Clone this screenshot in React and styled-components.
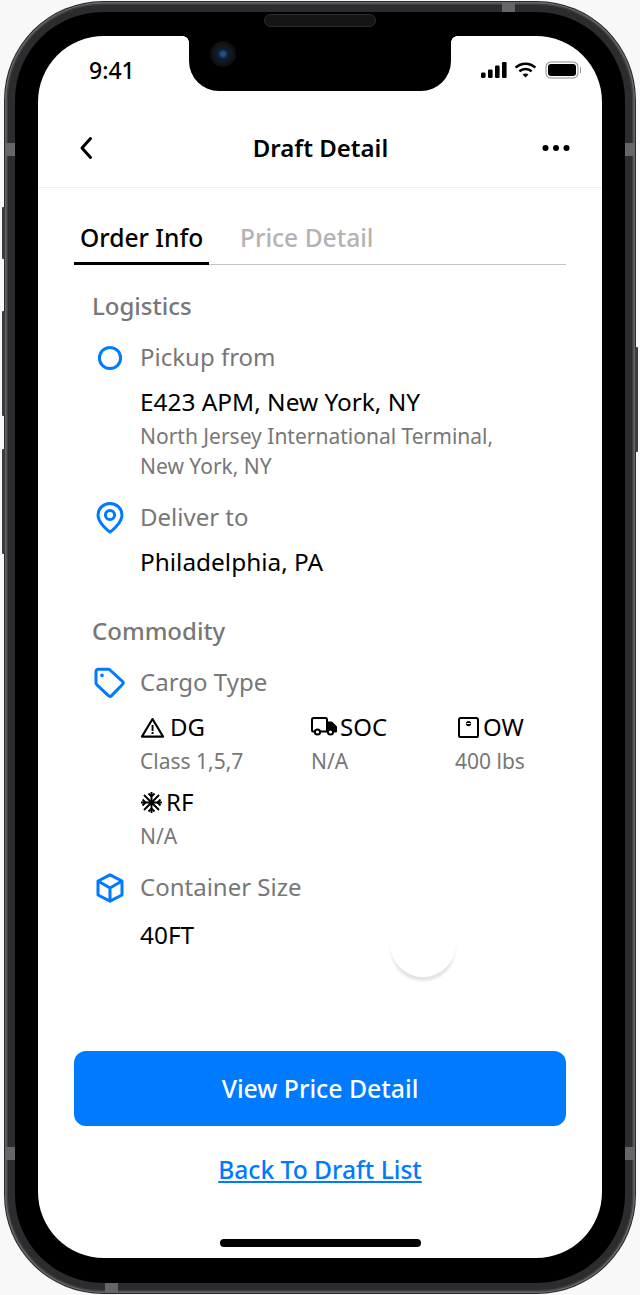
import React from 'react';
import styled, { createGlobalStyle } from 'styled-components';

const GlobalStyle = createGlobalStyle`
    html, body {
        margin: 0;
        padding: 0;
        background: #f8f8f8;
        font-family: "Noto Sans", "Open Sans", sans-serif;
    }
    * { box-sizing: border-box; }
`;

export default function App() {
    return (
        <>
            <GlobalStyle />
            <Page>
                <Phone>
                    <SideButton $side="left" $top={205} $h={52} />
                    <SideButton $side="left" $top={309} $h={105} />
                    <SideButton $side="left" $top={447} $h={105} />
                    <SideButton $side="right" $top={345} $h={105} />
                    <AntennaBand $side="left" $top={141} />
                    <AntennaBand $side="right" $top={141} />
                    <AntennaBand $side="left" $top={1145} />
                    <AntennaBand $side="right" $top={1145} />
                    <AntennaTop $left={172} $edge="bottom" />
                    <AntennaTop $left={569} $edge="top" />
                    <Speaker />
                    <Screen>
                        <Notch>
                            <Camera />
                        </Notch>
                        <StatusBar>
                            <Time>9:41</Time>
                            <StatusIcons>
                                <SignalIcon />
                                <WifiIcon />
                                <Battery />
                            </StatusIcons>
                        </StatusBar>
                        <NavBar>
                            <BackIcon />
                            <Title>Draft Detail</Title>
                            <DotsIcon />
                        </NavBar>
                        <Tabs>
                            <Tab $active>Order Info</Tab>
                            <Tab>Price Detail</Tab>
                        </Tabs>
                        <Content>
                            <SectionTitle>Logistics</SectionTitle>
                            <Row>
                                <CircleIcon />
                                <Label>Pickup from</Label>
                            </Row>
                            <Value>E423 APM, New York, NY</Value>
                            <Sub>North Jersey International Terminal,<br />New York, NY</Sub>
                            <Row>
                                <PinIcon />
                                <Label>Deliver to</Label>
                            </Row>
                            <Value>Philadelphia, PA</Value>

                            <SectionTitle $second>Commodity</SectionTitle>
                            <Row>
                                <TagIcon />
                                <Label>Cargo Type</Label>
                            </Row>
                            <CargoGrid>
                                <Cargo>
                                    <CargoName $gap={5}><WarningIcon />DG</CargoName>
                                    <CargoNote>Class 1,5,7</CargoNote>
                                </Cargo>
                                <Cargo>
                                    <CargoName $gap={3}><TruckIcon />SOC</CargoName>
                                    <CargoNote>N/A</CargoNote>
                                </Cargo>
                                <Cargo>
                                    <CargoName $gap={4} $inset={3}><ScaleIcon />OW</CargoName>
                                    <CargoNote>400 lbs</CargoNote>
                                </Cargo>
                                <Cargo>
                                    <CargoName $gap={3}><SnowIcon />RF</CargoName>
                                    <CargoNote>N/A</CargoNote>
                                </Cargo>
                            </CargoGrid>
                            <Row>
                                <BoxIcon />
                                <Label>Container Size</Label>
                            </Row>
                            <Value $low>40FT</Value>
                        </Content>
                        <Spinner />
                        <Footer>
                            <PrimaryButton>View Price Detail</PrimaryButton>
                            <BackLink href="#">Back To Draft List</BackLink>
                        </Footer>
                        <HomeBar />
                    </Screen>
                </Phone>
            </Page>
        </>
    );
}

const BLUE = '#007aff';

function BackIcon() {
    return (
        <svg width="14" height="24" viewBox="0 0 14 24" fill="none">
            <path d="M11.5 2.5 L3 12 L11.5 21.5" stroke="#000" strokeWidth="3" strokeLinecap="round" strokeLinejoin="round" />
        </svg>
    );
}

function DotsIcon() {
    return (
        <svg width="28" height="8" viewBox="0 0 28 8" fill="#000">
            <circle cx="3.5" cy="4" r="3" />
            <circle cx="14" cy="4" r="3" />
            <circle cx="24.5" cy="4" r="3" />
        </svg>
    );
}

function SignalIcon() {
    return (
        <svg width="26" height="16" viewBox="0 0 26 16" fill="#000">
            <rect x="0" y="10.5" width="4.6" height="5.5" rx="1.4" />
            <rect x="7" y="7.5" width="4.6" height="8.5" rx="1.2" />
            <rect x="14" y="3.5" width="4.6" height="12.5" rx="1.2" />
            <rect x="21" y="0" width="4.6" height="16" rx="1.2" />
        </svg>
    );
}

function WifiIcon() {
    return (
        <svg width="23" height="16" viewBox="0 0 24 17" fill="none" stroke="#000" strokeWidth="2.8">
            <path d="M1.5 6 C7.5 0.4 16.5 0.4 22.5 6" />
            <path d="M5.5 10 C9 6.6 15 6.6 18.5 10" />
            <path d="M12 16.5 L8.8 13.4 C10.6 11.8 13.4 11.8 15.2 13.4 Z" fill="#000" stroke="none" />
        </svg>
    );
}

function CircleIcon() {
    return (
        <IconSlot>
            <svg width="26" height="26" viewBox="0 0 26 26" fill="none">
                <circle cx="13" cy="13" r="10.6" stroke={BLUE} strokeWidth="3" />
            </svg>
        </IconSlot>
    );
}

function PinIcon() {
    return (
        <IconSlot>
            <svg width="28" height="32" viewBox="0 0 28 32" fill="none" stroke={BLUE} strokeWidth="3" strokeLinejoin="round">
                <path d="M14 30 C14 30 2 21.5 2 13 C2 6.4 7.4 1.6 14 1.6 C20.6 1.6 26 6.4 26 13 C26 21.5 14 30 14 30 Z" />
                <circle cx="14" cy="13" r="4.6" />
            </svg>
        </IconSlot>
    );
}

function TagIcon() {
    return (
        <IconSlot $shift={-1}>
            <svg width="32" height="32" viewBox="0 0 32 32" fill="none">
                <path d="M3 4.5 C3 3.2 4 2.2 5.3 2.2 L15.2 2.2 C15.9 2.2 16.5 2.5 17 3 L29.4 14.4 C30.3 15.3 30.3 16.6 29.4 17.5 L18.6 28.6 C17.7 29.5 16.3 29.5 15.4 28.7 L3.9 17.8 C3.3 17.3 3 16.6 3 15.8 Z" stroke={BLUE} strokeWidth="3" strokeLinejoin="round" />
                <circle cx="9" cy="8.4" r="1.8" fill={BLUE} />
            </svg>
        </IconSlot>
    );
}

function BoxIcon() {
    return (
        <IconSlot>
            <svg width="28" height="30" viewBox="0 0 28 30" fill="none" stroke={BLUE} strokeWidth="3" strokeLinejoin="round">
                <path d="M14 1.8 L26 8 L26 22 L14 28.2 L2 22 L2 8 Z" />
                <path d="M2 8 L14 15 L26 8 M14 15 L14 28.2" />
            </svg>
        </IconSlot>
    );
}

function WarningIcon() {
    return (
        <svg width="25" height="21" viewBox="0 0 24 21" fill="none">
            <path d="M12 2 L22.6 19.6 L1.4 19.6 Z" stroke="#000" strokeWidth="2.1" strokeLinejoin="round" />
            <rect x="11.1" y="8" width="1.9" height="6" fill="#000" />
            <rect x="11.1" y="15" width="1.9" height="2" fill="#000" />
        </svg>
    );
}

function TruckIcon() {
    return (
        <svg width="26" height="20" viewBox="0 0 26 20" fill="none" stroke="#000" strokeWidth="2" strokeLinejoin="round">
            <path d="M4 14.5 L2.6 14.5 C1.7 14.5 1 13.8 1 12.9 L1 2.6 C1 1.7 1.7 1 2.6 1 L14.5 1 C15.4 1 16 1.7 16 2.6 L16 14.5 L9 14.5" />
            <path d="M16 5.5 L20.5 5.5 L25 10 L25 14.5 L23 14.5 L16 14.5 Z" fill="#000" />
            <circle cx="6.5" cy="15" r="2.6" fill="#fff" />
            <circle cx="19.5" cy="15" r="2.6" fill="#fff" />
        </svg>
    );
}

function ScaleIcon() {
    return (
        <svg width="21" height="21" viewBox="0 0 21 21" fill="none">
            <rect x="1" y="1" width="19" height="19" rx="1.6" stroke="#000" strokeWidth="2" />
            <circle cx="10.5" cy="6.6" r="2.6" fill="#000" />
            <rect x="8.5" y="6" width="4" height="1" fill="#fff" />
        </svg>
    );
}

function SnowIcon() {
    return (
        <svg width="23" height="23" viewBox="0 0 23 23" fill="none" stroke="#000" strokeWidth="1.9">
            <path d="M11.5 1 L11.5 22 M1 11.5 L22 11.5 M4 4 L19 19 M19 4 L4 19" />
            <path d="M8.5 2.5 L11.5 5.5 L14.5 2.5 M8.5 20.5 L11.5 17.5 L14.5 20.5 M2.5 8.5 L5.5 11.5 L2.5 14.5 M20.5 8.5 L17.5 11.5 L20.5 14.5" />
        </svg>
    );
}

const Page = styled.div`
    width: 640px;
    height: 1295px;
    padding: 2px 5px;
    overflow: hidden;
`;

const Phone = styled.div`
    position: relative;
    width: 630px;
    height: 1291px;
    padding: 34px 33px 35px;
    background: #000;
    border-radius: 98px;
    box-shadow:
        0 0 0 1px #2a2a2c,
        inset 0 0 0 1.5px #66666a,
        inset 0 0 0 3px #3e3e40,
        inset 0 0 0 10px #2c2c2e,
        inset 0 0 0 11px #000;
`;

const SideButton = styled.span`
    position: absolute;
    top: ${p => p.$top}px;
    ${p => p.$side}: -3px;
    width: 3px;
    height: ${p => p.$h}px;
    background: #3c3c3e;
    border-radius: 1px;
`;

const AntennaBand = styled.span`
    position: absolute;
    top: ${p => p.$top}px;
    ${p => p.$side}: 1px;
    width: 9px;
    height: 13px;
    background: #66666a;
`;

const AntennaTop = styled.span`
    position: absolute;
    left: ${p => p.$left - 72}px;
    ${p => p.$edge}: 1px;
    width: 13px;
    height: 9px;
    background: #66666a;
`;

const Speaker = styled.span`
    position: absolute;
    top: 12px;
    left: 259px;
    width: 112px;
    height: 13px;
    background: #141414;
    border: 1px solid #2e2e30;
    border-radius: 7px;
`;

const Screen = styled.div`
    position: relative;
    display: flex;
    flex-direction: column;
    height: 100%;
    background: #fff;
    border-radius: 66px;
    overflow: hidden;
`;

const Notch = styled.div`
    position: absolute;
    top: 0;
    left: 151px;
    width: 262px;
    height: 55px;
    background: #000;
    border-radius: 0 0 30px 30px;

    &::before, &::after {
        content: '';
        position: absolute;
        top: 0;
        width: 6px;
        height: 6px;
    }
    &::before {
        left: -6px;
        background: radial-gradient(circle at 0 100%, transparent 5.5px, #000 6px);
    }
    &::after {
        right: -6px;
        background: radial-gradient(circle at 100% 100%, transparent 5.5px, #000 6px);
    }
`;

const Camera = styled.span`
    position: absolute;
    top: 5px;
    left: 21px;
    width: 26px;
    height: 26px;
    border-radius: 50%;
    background: radial-gradient(circle, #1f4f8c 0 2px, #0d1c33 5px, #14181e 8px, #0c0c0e 13px);
`;

const StatusBar = styled.div`
    display: flex;
    align-items: center;
    justify-content: space-between;
    height: 64px;
    padding: 4px 26px 0 51px;
    flex-shrink: 0;
`;

const Time = styled.span`
    font-size: 23px;
    font-weight: 500;
    color: #000;
`;

const StatusIcons = styled.div`
    display: flex;
    align-items: center;
    gap: 7px;
`;

const Battery = styled.span`
    position: relative;
    display: block;
    width: 28px;
    height: 12px;
    margin-left: 4px;
    background: #000;
    border-radius: 3px;
    box-shadow: 0 0 0 1.5px #fff, 0 0 0 2.5px #8a8a8a;

    &::after {
        content: '';
        position: absolute;
        top: 3px;
        right: -5px;
        width: 1.5px;
        height: 6px;
        background: #9a9a9a;
    }
`;

const NavBar = styled.div`
    display: flex;
    align-items: center;
    justify-content: space-between;
    height: 88px;
    padding: 8px 32px 0 41px;
    border-bottom: 1px solid #eeeeee;
    flex-shrink: 0;
`;

const Title = styled.h1`
    margin: 0 0 0 6px;
    font-size: 24px;
    line-height: 30px;
    font-weight: 600;
    color: #000;
`;

const Tabs = styled.div`
    display: flex;
    gap: 25px;
    margin: 24px 36px 0;
    border-bottom: 1px solid #c4c4c4;
    flex-shrink: 0;
`;

const Tab = styled.div`
    position: relative;
    width: ${p => (p.$active ? '135px' : 'auto')};
    padding: 11px 6px 11px;
    font-size: 24.6px;
    line-height: 30px;
    font-weight: 500;
    color: ${p => (p.$active ? '#000' : '#b3b3b3')};
    white-space: nowrap;
    ${p => p.$active && `
        &::after {
            content: '';
            position: absolute;
            left: 0;
            right: 0;
            bottom: -1px;
            height: 3px;
            background: #000;
        }
    `}
`;

const Content = styled.div`
    padding: 26px 40px 0 54px;
    flex-shrink: 0;
`;

const SectionTitle = styled.h2`
    margin: ${p => (p.$second ? '39px' : '0')} 0 0;
    font-size: 24px;
    line-height: 30px;
    font-weight: 500;
    color: #777;
`;

const Row = styled.div`
    display: flex;
    align-items: center;
    height: 30px;
    margin-top: 21px;
`;

const IconSlot = styled.span`
    display: flex;
    align-items: center;
    justify-content: center;
    width: 36px;
    margin: 1px ${p => 12 - (p.$shift || 0)}px 0 ${p => p.$shift || 0}px;
    flex-shrink: 0;
`;

const Label = styled.span`
    font-size: 24px;
    line-height: 30px;
    color: #777;
`;

const Value = styled.div`
    margin: ${p => (p.$low ? '18px' : '15px')} 0 0 48px;
    font-size: 24.4px;
    line-height: 30px;
    color: #000;
`;

const Sub = styled.div`
    margin: 5px 0 0 48px;
    font-size: 21px;
    line-height: 29.5px;
    color: #777;
`;

const CargoGrid = styled.div`
    display: grid;
    grid-template-columns: 171px 144px auto;
    row-gap: 11px;
    margin: 15px 0 0 48px;
`;

const Cargo = styled.div`
    display: flex;
    flex-direction: column;
    gap: 4px;
`;

const CargoName = styled.div`
    display: flex;
    align-items: center;
    gap: ${p => p.$gap}px;
    height: 30px;
    padding-left: ${p => p.$inset || 0}px;
    font-size: 24px;
    line-height: 30px;
    color: #000;

    svg {
        flex-shrink: 0;
    }
`;

const CargoNote = styled.div`
    font-size: 21px;
    line-height: 30px;
    color: #777;
`;

const Spinner = styled.span`
    position: absolute;
    top: 875px;
    left: 352px;
    width: 66px;
    height: 66px;
    border-radius: 50%;
    background: #fff;
    box-shadow: 0 5px 3px -1px #e2e2e2;
`;

const Footer = styled.div`
    display: flex;
    flex-direction: column;
    align-items: center;
    margin-top: auto;
    padding: 0 36px;
`;

const PrimaryButton = styled.button`
    width: 100%;
    height: 75px;
    padding-bottom: 2px;
    border: 0;
    border-radius: 12px;
    background: ${BLUE};
    color: #fff;
    font-family: inherit;
    font-size: 24.8px;
    font-weight: 500;
`;

const BackLink = styled.a`
    margin-top: 29px;
    font-size: 24.6px;
    line-height: 30px;
    font-weight: 500;
    color: ${BLUE};
    text-decoration: underline;
`;

const HomeBar = styled.span`
    align-self: center;
    width: 201px;
    height: 8px;
    margin: 54px 0 11px;
    border-radius: 4px;
    background: #000;
    flex-shrink: 0;
`;
